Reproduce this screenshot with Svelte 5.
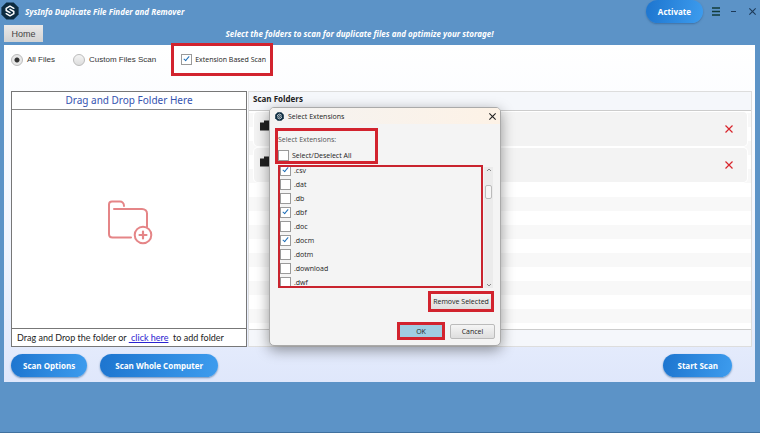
<script lang="ts">
    interface Extension {
        name: string;
        checked: boolean;
    }

    let scanMode = $state("all");
    let extensionScan = $state(true);
    let folders = $state([1, 2]);
    let extensions = $state<Extension[]>([
        { name: ".csv", checked: true },
        { name: ".dat", checked: false },
        { name: ".db", checked: false },
        { name: ".dbf", checked: true },
        { name: ".doc", checked: false },
        { name: ".docm", checked: true },
        { name: ".dotm", checked: false },
        { name: ".download", checked: false },
        { name: ".dwf", checked: false },
    ]);
    let dialogOpen = $state(true);

    let allChecked = $derived(extensions.every((e) => e.checked));

    function toggleAll() {
        const next = !allChecked;
        extensions.forEach((e) => (e.checked = next));
    }

    function removeSelected() {
        extensions = extensions.filter((e) => !e.checked);
    }

    function removeFolder(id: number) {
        folders = folders.filter((f) => f !== id);
    }
</script>

{#snippet logo(size: number)}
    <svg width={size} height={size} viewBox="0 0 18 18" aria-hidden="true">
        <path d="M5.4 0.4h7.2L17.6 5.4v7.2L12.6 17.6H5.4L0.4 12.6V5.4z" fill="#0d2c40" />
        <g fill="none" stroke="#fff" stroke-width="1.5" stroke-linejoin="round" stroke-linecap="round">
            <path d="M12.800 6.300 9 4.200 5.200 6.300V8.500L9 10.600" />
            <path d="M5.200 11.700 9 13.800 12.800 11.700V9.500L9 7.400" />
        </g>
    </svg>
{/snippet}

{#snippet cross(size: number)}
    <svg width={size} height={size} viewBox="0 0 10 10" aria-hidden="true">
        <path d="M1.5 1.5l7 7M8.5 1.5l-7 7" fill="none" stroke="currentColor" stroke-width="1.2" />
    </svg>
{/snippet}

<div class="app">
    <header class="titlebar">
        {@render logo(18)}
        <h1>SysInfo Duplicate File Finder and Remover</h1>
        <button class="pill activate">Activate</button>
        <button class="icon menu" aria-label="Menu">
            <svg width="8" height="9" viewBox="0 0 8 9"><path d="M0 1h8M0 4.5h8M0 8h8" stroke="#123c3a" stroke-width="1.6" /></svg>
        </button>
        <button class="icon" aria-label="Minimize">
            <svg width="6" height="8" viewBox="0 0 6 8"><path d="M0 4.5h5" stroke="#1d3a58" /></svg>
        </button>
        <button class="icon" aria-label="Close">{@render cross(9)}</button>
    </header>

    <nav class="toolbar">
        <button class="home">Home</button>
        <p>Select the folders to scan for duplicate files and optimize your storage!</p>
    </nav>

    <main class="panel">
        <div class="options">
            <label class="radio">
                <input type="radio" name="mode" value="all" bind:group={scanMode} />
                All Files
            </label>
            <label class="radio">
                <input type="radio" name="mode" value="custom" bind:group={scanMode} />
                Custom Files Scan
            </label>
            <label class="check extension marked">
                <input type="checkbox" bind:checked={extensionScan} />
                Extension Based Scan
            </label>
        </div>

        <div class="columns">
            <section class="drop">
                <h2>Drag and Drop Folder Here</h2>
                <div class="drop-area">
                    <svg width="46" height="46" viewBox="0 0 46 46" aria-hidden="true">
                        <g fill="none" stroke="#e58587" stroke-width="2" stroke-linecap="round" stroke-linejoin="round">
                            <path d="M17 6c0-3-2-4.500-4-4.500H5c-2 0-3 1-3 3V34c0 2 1.500 3.500 3.500 3.500H24" />
                            <path d="M7 9h28c3 0 5 2 5 4.500V27" />
                            <circle cx="36" cy="35" r="8.300" />
                            <path d="M32.500 35h7M36 31.500v7" stroke-width="2.200" />
                        </g>
                    </svg>
                </div>
                <p class="drop-foot">
                    Drag and Drop the folder or <a href="#browse">&nbsp;click here</a>&nbsp; to add folder
                </p>
            </section>

            <section class="folders">
                <h2>Scan Folders</h2>
                <ul>
                    {#each folders as id (id)}
                        <li>
                            <svg class="folder" width="14" height="11" viewBox="0 0 14 11" aria-hidden="true">
                                <path d="M0 2.500h4V0.500h6v2h4v8H0z" fill="#222" />
                            </svg>
                            <button class="icon remove" aria-label="Remove folder" onclick={() => removeFolder(id)}>
                                {@render cross(10)}
                            </button>
                        </li>
                    {/each}
                </ul>
            </section>
        </div>

        <footer>
            <button class="pill">Scan Options</button>
            <button class="pill whole">Scan Whole Computer</button>
            <button class="pill start">Start Scan</button>
        </footer>
    </main>

    {#if dialogOpen}
        <div class="dialog" role="dialog" aria-labelledby="dialog-title">
            <div class="dialog-bar">
                {@render logo(9)}
                <h2 id="dialog-title">Select Extensions</h2>
                <button class="icon" aria-label="Close dialog" onclick={() => (dialogOpen = false)}>
                    {@render cross(9)}
                </button>
            </div>

            <div class="select-all marked">
                <p>Select Extensions:</p>
                <label class="check">
                    <input type="checkbox" checked={allChecked} onchange={toggleAll} />
                    Select/Deselect All
                </label>
            </div>

            <div class="list-row">
                <div class="ext-list">
                    {#each extensions as ext (ext.name)}
                        <label class="check">
                            <input type="checkbox" bind:checked={ext.checked} />
                            {ext.name}
                        </label>
                    {/each}
                </div>
                <div class="scrollbar" aria-hidden="true">
                    <svg width="8" height="6" viewBox="0 0 8 6"><path d="M2 4l2-2 2 2" fill="none" stroke="#888" /></svg>
                    <span class="thumb"></span>
                    <svg width="8" height="6" viewBox="0 0 8 6"><path d="M2 2l2 2 2-2" fill="none" stroke="#888" /></svg>
                </div>
            </div>

            <button class="flat marked remove-selected" onclick={removeSelected}>Remove Selected</button>

            <div class="actions">
                <button class="flat marked ok" onclick={() => (dialogOpen = false)}>OK</button>
                <button class="flat" onclick={() => (dialogOpen = false)}>Cancel</button>
            </div>
        </div>
    {/if}
</div>

<style>
    :global(body) {
        background: #5c93c7;
    }

    .app {
        position: relative;
        box-sizing: border-box;
        min-height: 100vh;
        display: flex;
        flex-direction: column;
        padding-bottom: 50px;
        border-bottom: 1px solid #41719f;
        background: #5c93c7;
        font-family: "Open Sans", "Noto Sans", sans-serif;
        font-size: 8px;
        color: #222;
    }

    h1,
    h2,
    p,
    ul {
        margin: 0;
        padding: 0;
        font-weight: 400;
    }

    button {
        font: inherit;
        color: inherit;
        padding: 0;
        border: 0;
        white-space: nowrap;
        cursor: pointer;
    }

    svg {
        display: block;
        flex: none;
    }

    .icon {
        background: none;
    }

    /* Title bar and toolbar */
    .titlebar {
        display: flex;
        align-items: center;
        height: 22px;
        padding: 0 3px 0 1px;
        color: #1d3a58;
    }
    .titlebar h1 {
        flex: 1;
        margin-left: 6px;
        font-family: "Noto Sans", sans-serif;
        font-size: 8px;
        font-weight: 700;
        font-style: italic;
        color: #fff;
    }
    .titlebar .icon {
        margin-left: 11px;
    }
    .titlebar .menu {
        margin-left: 9px;
    }

    .pill {
        height: 23px;
        padding: 0 12px;
        border-radius: 12px;
        background: linear-gradient(100deg, #1d75cf, #3d9cee);
        box-shadow: 0 1px 2px #2c5a8c99;
        color: #fff;
        font-weight: 700;
    }

    .toolbar {
        display: grid;
        grid-template-columns: 39px 1fr 84px;
        align-items: center;
        height: 23px;
        padding-left: 4px;
    }
    .toolbar p {
        text-align: center;
        font-family: "Noto Sans", sans-serif;
        font-weight: 700;
        font-style: italic;
        color: #fff;
    }
    .home {
        height: 17px;
        background: linear-gradient(#e9e9e9, #d2d2d2);
        font-family: "Liberation Sans", Arial, sans-serif;
        font-size: 9px;
        color: #444;
    }

    /* Main panel */
    .panel {
        flex: 1;
        display: flex;
        flex-direction: column;
        margin: 0 5px 0 4px;
        padding: 0 3px 0 7px;
        background: linear-gradient(#fff, #fbfcff 20%, #f1f5fe 60%, #dfe7fb);
    }

    .options {
        display: flex;
        align-items: center;
        height: 29px;
        margin-bottom: 17px;
    }
    .radio {
        display: flex;
        align-items: center;
        gap: 4px;
        margin-right: 18px;
        font-family: "Liberation Sans", Arial, sans-serif;
        font-size: 8px;
        color: #333;
    }
    .radio input {
        appearance: none;
        box-sizing: border-box;
        width: 12px;
        height: 12px;
        margin: 0;
        border: 1px solid #bbb;
        border-radius: 50%;
        background: linear-gradient(#f4f4f4, #ddd);
    }
    .radio input:checked {
        background: radial-gradient(circle, #333 2px, #e8e8e8 3px);
    }

    .check {
        display: flex;
        align-items: center;
        gap: 3px;
        height: 14px;
        flex: none;
        font-size: 7px;
    }
    .check input {
        appearance: none;
        position: relative;
        box-sizing: border-box;
        width: 11px;
        height: 11px;
        margin: 0;
        border: 1px solid #9a9a9a;
        background: #fff;
    }
    .check input:checked::after {
        content: "";
        position: absolute;
        left: 3px;
        top: 0;
        width: 2px;
        height: 5px;
        border: solid #1f6fb8;
        border-width: 0 1px 1px 0;
        transform: rotate(40deg);
    }

    /* Red frame around the controls that matter for extension scans */
    .marked {
        outline: 3px solid #d2232e;
    }
    .extension {
        height: 27px;
        padding: 0 4px 0 7px;
    }

    .columns {
        flex: 1;
        display: grid;
        grid-template-columns: 236px 1fr;
        gap: 1px;
    }

    .drop {
        display: flex;
        flex-direction: column;
        border: 1px solid #777;
        background: #fff;
    }
    .drop h2 {
        height: 17px;
        line-height: 17px;
        border-bottom: 1px solid #888;
        text-align: center;
        font-family: "Noto Sans", sans-serif;
        font-size: 10px;
        color: #3553b0;
    }
    .drop-area {
        flex: 1;
        display: grid;
        place-items: center;
        padding: 7px 0 0 2px;
    }
    .drop-foot {
        height: 17px;
        line-height: 17px;
        padding-left: 5px;
        border-top: 1px solid #777;
        font-family: Lato, sans-serif;
        font-size: 9px;
        white-space: nowrap;
    }
    .drop-foot a {
        color: #2a22d0;
    }

    .folders {
        display: flex;
        flex-direction: column;
        padding-bottom: 16px;
        border: 1px solid #ddd;
        background: #f5f7fb;
    }
    .folders h2 {
        height: 18px;
        line-height: 14px;
        padding-left: 4px;
        font-size: 8px;
        font-weight: 700;
    }
    .folders ul {
        flex: 1;
        list-style: none;
        border-top: 1px solid #ccc;
        border-bottom: 1px solid #ccc;
        padding-top: 1px;
        background: repeating-linear-gradient(#f8f8f8 0 14px, #fff 14px 28px) 0 2px;
    }
    .folders li {
        display: flex;
        align-items: center;
        justify-content: space-between;
        height: 34px;
        padding: 0 13px 0 6px;
        margin: 0 4px 0 5px;
        border-radius: 4px;
        background: #f3f3f3;
        box-shadow: 0 0 0 1px #fff;
    }
    .folders li + li {
        margin-top: 2px;
    }
    .folder {
        margin-bottom: 8px;
    }
    .remove {
        color: #d8252c;
    }

    footer {
        display: flex;
        gap: 13px;
        padding: 7px 20px 5px 0;
    }
    .start {
        margin-left: auto;
        padding: 0 14px;
    }
    .whole {
        padding: 0 15px;
    }

    /* Extension dialog */
    .dialog {
        position: absolute;
        top: 107px;
        left: calc(50% - 111px);
        box-sizing: border-box;
        width: 232px;
        padding: 0 7px 6px;
        border-radius: 5px;
        border: 1px solid #aaa;
        background: #f4f4f4;
        box-shadow: 0 4px 14px #00000066;
        font-size: 7px;
    }
    .dialog-bar {
        display: flex;
        align-items: center;
        gap: 4px;
        height: 16px;
        margin: 0 -7px 7px;
        padding: 0 3px 0 5px;
        border-radius: 4px 4px 0 0;
        background: linear-gradient(90deg, #f4f3f2, #fdf2e6);
    }
    .dialog-bar h2 {
        flex: 1;
        font-size: 7px;
    }

    .select-all {
        box-sizing: border-box;
        width: 97px;
        height: 30px;
        margin-left: 1px;
    }
    .select-all p {
        height: 17px;
        line-height: 17px;
        color: #555;
    }

    .list-row {
        display: flex;
        gap: 1px;
        margin: 4px 0 6px 1px;
    }
    .ext-list {
        box-sizing: border-box;
        flex: 1;
        display: flex;
        flex-direction: column;
        justify-content: center;
        height: 123px;
        border: 2px solid #c9232e;
        overflow: hidden;
    }
    .scrollbar {
        display: flex;
        flex-direction: column;
        align-items: center;
        justify-content: space-between;
        width: 9px;
        margin-top: 2px;
        background: #ebebeb;
    }
    .thumb {
        width: 5px;
        height: 12px;
        margin: 12px 0 auto;
        border: 1px solid #bbb;
        border-radius: 2px;
        background: #f6f6f6;
    }

    .flat {
        height: 15px;
        border: 1px solid #bbb;
        border-radius: 2px;
        background: linear-gradient(#f5f5f5, #dedede);
        width: 45px;
    }
    .remove-selected {
        display: block;
        width: 60px;
        margin: 0 2px 15px auto;
        border: 0;
        border-radius: 0;
    }
    .actions {
        display: flex;
        justify-content: flex-end;
        gap: 8px;
        margin-right: -2px;
    }
    .ok {
        height: 12px;
        margin-top: 1px;
        border: 0;
        border-radius: 0;
        background: #a0cde2;
        width: 42px;
    }
</style>
